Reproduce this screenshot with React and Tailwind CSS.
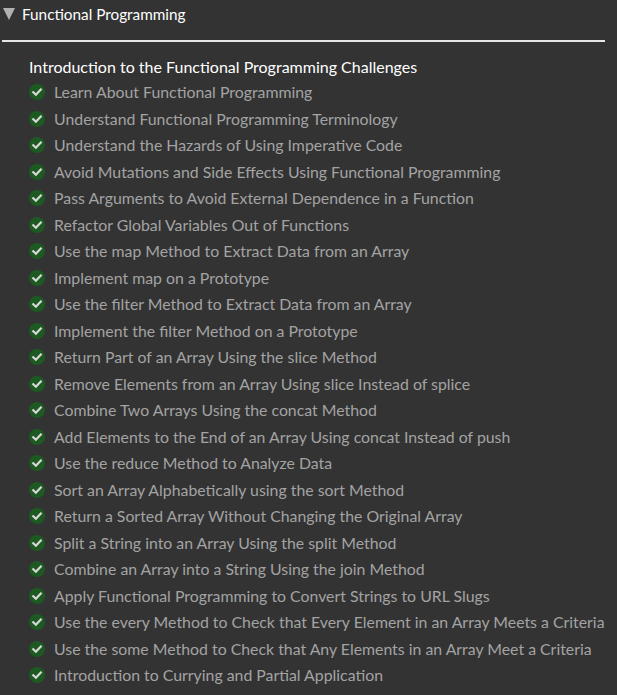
import React from "react";

const challenges = [
  "Learn About Functional Programming",
  "Understand Functional Programming Terminology",
  "Understand the Hazards of Using Imperative Code",
  "Avoid Mutations and Side Effects Using Functional Programming",
  "Pass Arguments to Avoid External Dependence in a Function",
  "Refactor Global Variables Out of Functions",
  "Use the map Method to Extract Data from an Array",
  "Implement map on a Prototype",
  "Use the filter Method to Extract Data from an Array",
  "Implement the filter Method on a Prototype",
  "Return Part of an Array Using the slice Method",
  "Remove Elements from an Array Using slice Instead of splice",
  "Combine Two Arrays Using the concat Method",
  "Add Elements to the End of an Array Using concat Instead of push",
  "Use the reduce Method to Analyze Data",
  "Sort an Array Alphabetically using the sort Method",
  "Return a Sorted Array Without Changing the Original Array",
  "Split a String into an Array Using the split Method",
  "Combine an Array into a String Using the join Method",
  "Apply Functional Programming to Convert Strings to URL Slugs",
  "Use the every Method to Check that Every Element in an Array Meets a Criteria",
  "Use the some Method to Check that Any Elements in an Array Meet a Criteria",
  "Introduction to Currying and Partial Application",
];

const CheckCircle = () => (
  <svg width="16" height="16" viewBox="0 0 16 16" className="shrink-0">
    <circle cx="8" cy="8" r="8" fill="#1d5a22" />
    <path d="M4.3 8.2 L6.9 10.7 L11.8 5.6" fill="none" stroke="#d8d8d8" strokeWidth="2.2" strokeLinecap="square" />
  </svg>
);

export default function App() {
  return (
    <div className="min-h-[695px] bg-[#333333] font-['Lato','Open_Sans',sans-serif] text-[15.85px]">
      <div className="flex items-center h-[28px] pl-[3px] text-white text-[15.3px]">
        <svg width="12" height="12" viewBox="0 0 12 12" className="mr-[7px] shrink-0">
          <path d="M0 0 H12 L6 12 Z" fill="#b0b0b0" />
        </svg>
        <span>Functional Programming</span>
      </div>
      <div className="ml-[2px] mr-[12px] mt-[12px] h-[2px] bg-[#e6e6e6]" />
      <div className="pl-[29px] pt-[12px]">
        <div className="h-[25px] flex items-center text-white text-[16px]">
          Introduction to the Functional Programming Challenges
        </div>
        <ul>
          {challenges.map((c, i) => (
            <li key={i} className="h-[26.5px] flex items-center gap-[9px] text-[#a3a3a3]">
              <CheckCircle />
              <span className="whitespace-nowrap">{c}</span>
            </li>
          ))}
        </ul>
      </div>
    </div>
  );
}
